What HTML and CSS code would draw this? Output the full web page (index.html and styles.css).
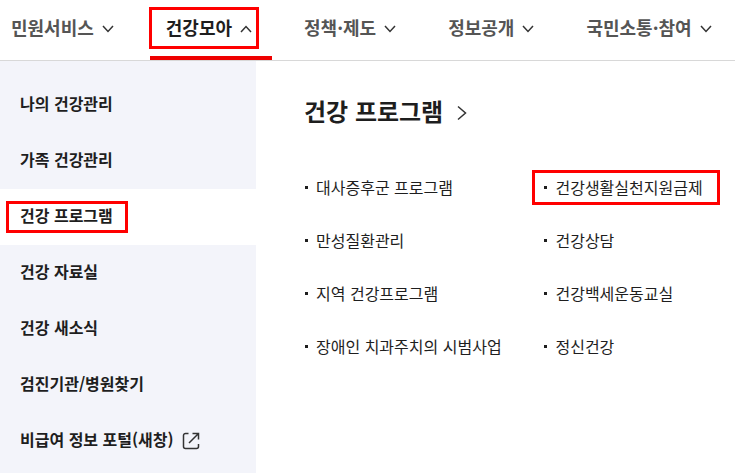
FILE: index.html
```html
<!DOCTYPE html>
<html lang="ko">
<head>
    <meta charset="UTF-8">
    <meta name="viewport" content="width=device-width, initial-scale=1.0">
    <title>건강모아</title>
    <link rel="stylesheet" href="styles.css">
</head>
<body>
    <header class="header">
        <nav class="gnb">
            <button type="button" class="gnb-item">민원서비스
                <svg class="chevron" viewBox="0 0 12 8"><path d="M1 1l5 5.5L11 1"/></svg>
            </button>
            <button type="button" class="gnb-item active" aria-expanded="true">건강모아
                <svg class="chevron" viewBox="0 0 12 8"><path d="M1 7l5-5.5L11 7"/></svg>
                <span class="mark mark-gnb"></span>
            </button>
            <button type="button" class="gnb-item">정책·제도
                <svg class="chevron" viewBox="0 0 12 8"><path d="M1 1l5 5.5L11 1"/></svg>
            </button>
            <button type="button" class="gnb-item">정보공개
                <svg class="chevron" viewBox="0 0 12 8"><path d="M1 1l5 5.5L11 1"/></svg>
            </button>
            <button type="button" class="gnb-item">국민소통·참여
                <svg class="chevron" viewBox="0 0 12 8"><path d="M1 1l5 5.5L11 1"/></svg>
            </button>
        </nav>
    </header>
    <div class="container">
        <aside class="side">
            <a href="#" class="side-item">나의 건강관리</a>
            <a href="#" class="side-item">가족 건강관리</a>
            <a href="#" class="side-item active">건강 프로그램<span class="mark mark-side"></span></a>
            <a href="#" class="side-item">건강 자료실</a>
            <a href="#" class="side-item">건강 새소식</a>
            <a href="#" class="side-item">검진기관/병원찾기</a>
            <a href="#" class="side-item">비급여 정보 포털(새창)
                <svg class="newwin" viewBox="0 0 18 18"><path d="M6.500 1.500H3.500a2 2 0 0 0-2 2v11a2 2 0 0 0 2 2h11a2 2 0 0 0 2-2V12M10.500 1.500h6v6M16 2L7 11"/></svg>
            </a>
        </aside>
        <main class="content">
            <h2 class="title">
                <a href="#">건강 프로그램
                    <svg class="arrow" viewBox="0 0 10 16"><path d="M1 1.500L8.500 8 1 14.500"/></svg>
                </a>
            </h2>
            <ul class="menu">
                <li><a href="#">대사증후군 프로그램</a></li>
                <li><a href="#">건강생활실천지원금제</a><span class="mark mark-menu"></span></li>
                <li><a href="#">만성질환관리</a></li>
                <li><a href="#">건강상담</a></li>
                <li><a href="#">지역 건강프로그램</a></li>
                <li><a href="#">건강백세운동교실</a></li>
                <li><a href="#">장애인 치과주치의 시범사업</a></li>
                <li><a href="#">정신건강</a></li>
            </ul>
        </main>
    </div>
</body>
</html>
```
FILE: styles.css
```css
* {
    box-sizing: border-box;
}
body {
    margin: 0;
    min-height: 100vh;
    display: flex;
    flex-direction: column;
    font-family: "Noto Sans CJK KR", sans-serif;
    font-size: 16px;
    line-height: 24px;
    color: #1e1e1e;
    background-color: #fff;
}
a {
    color: inherit;
    text-decoration: none;
}
svg {
    flex: none;
    fill: none;
    stroke: #333;
    stroke-width: 1.5;
}

/* header */
.header {
    border-bottom: 1px solid #d8d8d8;
}
.gnb {
    display: flex;
    gap: 16px;
}
.gnb-item {
    position: relative;
    display: flex;
    align-items: center;
    gap: 8px;
    height: 60px;
    padding: 0 20px 6px 16px;
    border: 0;
    background: none;
    font-family: inherit;
    font-size: 18px;
    font-weight: 700;
    line-height: 24px;
    color: #555;
    white-space: nowrap;
    cursor: pointer;
}
.gnb-item:first-child {
    padding-left: 11px;
}
.gnb-item.active {
    color: #1e1e1e;
}
.gnb-item.active::after {
    content: "";
    position: absolute;
    left: 0;
    right: 0;
    bottom: 0;
    height: 4px;
    background-color: #ee0000;
}
.chevron {
    width: 12px;
    height: 8px;
    margin-top: 4px;
}

/* body */
.container {
    display: flex;
    flex: 1;
}
.side {
    width: 256px;
    flex: none;
    padding-top: 16px;
    background-color: #f3f4fa;
}
.side-item {
    position: relative;
    display: flex;
    align-items: center;
    gap: 8px;
    height: 56px;
    padding: 0 20px 4px;
    font-weight: 700;
    white-space: nowrap;
}
.side-item.active {
    background-color: #fff;
}
.newwin {
    width: 18px;
    height: 18px;
    margin-top: 4px;
}
.content {
    flex: 1;
    padding: 32px 0 0 48px;
}
.title {
    margin: 0;
    font-size: 24px;
    line-height: 36px;
}
.title a {
    display: inline-flex;
    align-items: center;
    gap: 14px;
}
.arrow {
    width: 10px;
    height: 16px;
    margin-top: 4px;
}
.menu {
    display: grid;
    grid-template-columns: 5fr 4fr;
    row-gap: 29px;
    margin: 46px 0 0;
    padding: 0;
    list-style: none;
}
.menu li {
    position: relative;
    display: flex;
    align-items: center;
    gap: 8px;
    padding-left: 1px;
    white-space: nowrap;
}
.menu li::before {
    content: "";
    width: 3px;
    height: 3px;
    background-color: #1e1e1e;
}

/* red frames */
.mark {
    position: absolute;
    border: 3px solid #ff0000;
    pointer-events: none;
}
.mark-gnb {
    top: 7px;
    left: -1px;
    width: 110px;
    height: 42px;
}
.mark-side {
    top: 12px;
    left: 6px;
    width: 122px;
    height: 32px;
}
.mark-menu {
    top: -5px;
    left: -11px;
    width: 188px;
    height: 35px;
}
```
